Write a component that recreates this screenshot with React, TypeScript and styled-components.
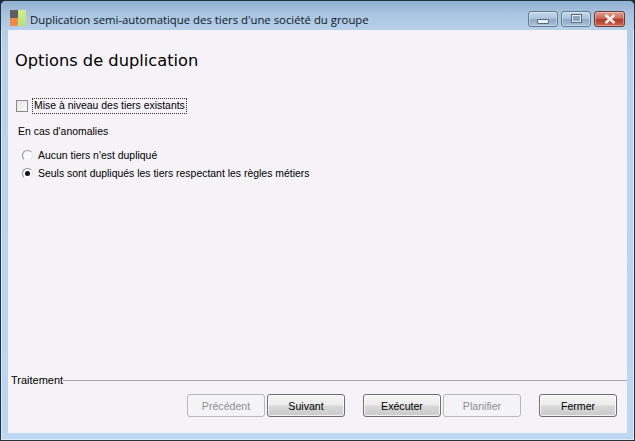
import React from 'react';
import styled, {createGlobalStyle} from 'styled-components';

const GlobalStyle = createGlobalStyle`
  html, body {
    margin: 0;
    padding: 0;
    background: #1c2a33;
  }
`;

const Frame = styled.div`
  box-sizing: border-box;
  width: 635px;
  height: 441px;
  display: flex;
  flex-direction: column;
  border: 1px solid #24343f;
  border-radius: 6px 6px 0 0;
  background: linear-gradient(180deg, #a9c4e0 0%, #b9d2ec 12%, #bdd6f1 100%);
  box-shadow: inset 0 0 0 1px #dcebf8;
  font-family: "Liberation Sans", Arial, sans-serif;
  color: #000;
`;

const TitleBar = styled.div`
  box-sizing: border-box;
  height: 29px;
  flex: none;
  display: flex;
  align-items: center;
  padding: 6px 9px 0 9px;
  background: linear-gradient(180deg, #8fb0d0 0%, #a9c4e0 45%, #b7d0ea 100%);
  border-radius: 5px 5px 0 0;
`;

const AppIcon = styled.svg`
  width: 17px;
  height: 17px;
  flex: none;
`;

const Title = styled.div`
  flex: 1;
  margin-left: 3px;
  padding-top: 1px;
  font-family: "Open Sans", "Noto Sans", sans-serif;
  font-size: 11.35px;
  white-space: nowrap;
  color: #10181f;
`;

const Controls = styled.div`
  display: flex;
  gap: 3px;
`;

const Control = styled.div<{$close?: boolean}>`
  box-sizing: border-box;
  width: ${p => (p.$close ? 31 : 30)}px;
  height: 16px;
  display: flex;
  align-items: center;
  justify-content: center;
  border: 1px solid ${p => (p.$close ? '#6e3a36' : '#617a94')};
  border-radius: 3px;
  background: ${p =>
    p.$close
      ? 'linear-gradient(180deg, #dfa096 0%, #c96a58 45%, #b2392a 55%, #cc6a55 100%)'
      : 'linear-gradient(180deg, #c5d7ea 0%, #adc4dc 45%, #8fa9c4 55%, #a9c3dd 100%)'};
  box-shadow: inset 0 0 0 1px rgba(255, 255, 255, 0.35);
`;

const MinGlyph = styled.div`
  width: 10px;
  height: 3px;
  margin-top: 5px;
  background: #e9eff5;
  border: 1px solid #55677a;
  border-radius: 1px;
`;

const MaxGlyph = styled.div`
  box-sizing: border-box;
  width: 11px;
  height: 9px;
  border: 2px solid #e9eff5;
  outline: 1px solid #55677a;
  outline-offset: -1px;
  background: #8ea6bf;
`;

const Client = styled.div`
  flex: 1;
  display: flex;
  flex-direction: column;
  margin: 0 7px 7px 7px;
  background: #f6f3f8;
  min-height: 0;
`;

const Main = styled.div`
  flex: 1;
  padding: 20px 7px 0 7px;
`;

const Heading = styled.h1`
  margin: 0;
  font-family: "DejaVu Sans", Verdana, sans-serif;
  font-weight: 400;
  font-size: 16.25px;
  line-height: 22px;
  color: #000;
`;

const CheckRow = styled.label`
  display: flex;
  align-items: center;
  margin-top: 26px;
  height: 15px;
  font-size: 10.45px;
`;

const CheckBox = styled.span`
  box-sizing: border-box;
  width: 12px;
  height: 12px;
  margin: 0 4px 0 1px;
  border: 1px solid #8a8a8a;
  background: linear-gradient(135deg, #e6e4e6 0%, #fafafa 100%);
`;

const FocusText = styled.span`
  padding: 0 1px;
  border: 1px dotted #333;
  line-height: 14px;
`;

const GroupLabel = styled.div`
  margin: 12px 0 0 3px;
  font-size: 10.45px;
  line-height: 13px;
`;

const RadioList = styled.div`
  margin: 11px 0 0 7px;
  display: flex;
  flex-direction: column;
  gap: 5px;
`;

const RadioRow = styled.div`
  display: flex;
  align-items: center;
  height: 13px;
  font-size: 10.45px;
`;

const RadioDot = styled.span<{$on?: boolean}>`
  box-sizing: border-box;
  position: relative;
  width: 11px;
  height: 11px;
  margin-right: 5px;
  border-radius: 50%;
  border: 1px solid #8f8f8f;
  border-right-color: #e4e4e4;
  border-bottom-color: #f4f4f4;
  background: #fbfbfb;

  &::after {
    content: '';
    display: ${p => (p.$on ? 'block' : 'none')};
    position: absolute;
    left: 2px;
    top: 2px;
    width: 5px;
    height: 5px;
    border-radius: 50%;
    background: #111;
  }
`;

const Footer = styled.div`
  flex: none;
  padding: 0 10px 16px 3px;
`;

const Legend = styled.div`
  display: flex;
  align-items: center;
  font-size: 11px;
  line-height: 13px;
  margin-right: -10px;

  &::after {
    content: '';
    flex: 1;
    height: 1px;
    background: #a6a3a8;
  }
`;

const ButtonRow = styled.div`
  display: flex;
  justify-content: flex-end;
  margin-top: 7px;
`;

const ActionButton = styled.button<{$gap?: number}>`
  box-sizing: border-box;
  width: 78px;
  height: 23px;
  margin-left: ${p => p.$gap ?? 0}px;
  padding: 0;
  font-family: "Liberation Sans", Arial, sans-serif;
  font-size: 10.6px;
  color: #000;
  border: 1px solid #6f6f6f;
  border-radius: 3px;
  background: linear-gradient(180deg, #f4f4f4 0%, #ececec 45%, #d8d8d8 55%, #c9c9c9 100%);
  box-shadow: inset 0 0 0 1px rgba(255, 255, 255, 0.75);

  &:disabled {
    color: #8f8f8f;
    border-color: #b9b9b9;
    background: #f4f3f6;
    box-shadow: none;
  }
`;

const App = () => (
    <>
        <GlobalStyle/>
        <Frame>
            <TitleBar>
                <AppIcon viewBox="0 0 17 17">
                    <defs>
                        <linearGradient id="leaf" x1="0" y1="0" x2="0" y2="1">
                            <stop offset="0" stopColor="#d2ee8e"/>
                            <stop offset="1" stopColor="#b6e07a"/>
                        </linearGradient>
                    </defs>
                    <rect x="0" y="0" width="8" height="8" fill="#5f5f5f"/>
                    <rect x="0" y="8" width="8" height="8" fill="#f08a4b"/>
                    <rect x="8" y="0" width="8" height="16" fill="url(#leaf)"/>
                </AppIcon>
                <Title>Duplication semi-automatique des tiers d'une société du groupe</Title>
                <Controls>
                    <Control><MinGlyph/></Control>
                    <Control><MaxGlyph/></Control>
                    <Control $close>
                        <svg width="14" height="10" viewBox="0 0 14 10">
                            <path d="M2.5 1 L11.5 9 M11.5 1 L2.5 9" stroke="#f6eeec" strokeWidth="2.6"/>
                        </svg>
                    </Control>
                </Controls>
            </TitleBar>
            <Client>
                <Main>
                    <Heading>Options de duplication</Heading>
                    <CheckRow>
                        <CheckBox/>
                        <FocusText>Mise à niveau des tiers existants</FocusText>
                    </CheckRow>
                    <GroupLabel>En cas d'anomalies</GroupLabel>
                    <RadioList>
                        <RadioRow><RadioDot/>Aucun tiers n'est dupliqué</RadioRow>
                        <RadioRow><RadioDot $on/>Seuls sont dupliqués les tiers respectant les règles métiers</RadioRow>
                    </RadioList>
                </Main>
                <Footer>
                    <Legend>Traitement</Legend>
                    <ButtonRow>
                        <ActionButton disabled>Précédent</ActionButton>
                        <ActionButton $gap={2}>Suivant</ActionButton>
                        <ActionButton $gap={18}>Exécuter</ActionButton>
                        <ActionButton disabled $gap={2}>Planifier</ActionButton>
                        <ActionButton $gap={18}>Fermer</ActionButton>
                    </ButtonRow>
                </Footer>
            </Client>
        </Frame>
    </>
);

export default App;
